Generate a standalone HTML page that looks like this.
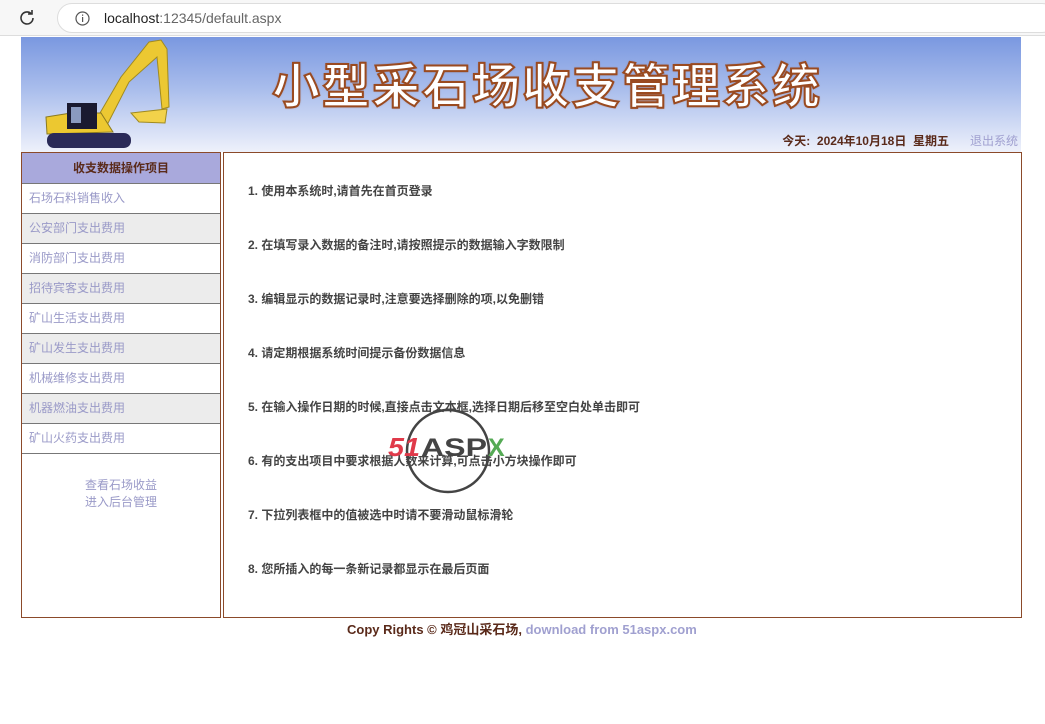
<!DOCTYPE html>
<html><head><meta charset="utf-8"><style>
*{margin:0;padding:0;box-sizing:border-box}
body{width:1045px;height:724px;background:#fff;font-family:"Liberation Sans","Noto Sans CJK SC","WenQuanYi Zen Hei",sans-serif;position:relative;overflow:hidden}
.bar{position:absolute;left:0;top:0;width:1045px;height:36px;background:#f7f7f7;border-bottom:1px solid #ddd}
.url{position:absolute;left:57px;top:3px;width:1000px;height:30px;border-radius:15px;background:#fff;border:1px solid #ddd;font-size:14px;color:#222;line-height:28px;padding-left:46px}
.url span{color:#666}
.banner{position:absolute;left:21px;top:37px;width:1000px;height:115px;background:linear-gradient(#7a98e0 0%,#a9bdec 45%,#eef1fb 100%)}
.title{position:absolute;left:251px;top:10px;font-size:48px;font-weight:bold;color:#fff;letter-spacing:2px;-webkit-text-stroke:2px #9a4a20;text-shadow:0 0 2px #9a4a20;white-space:nowrap}
.date{position:absolute;right:72px;top:95px;font-size:12px;font-weight:bold;color:#5a2a1a}
.logout{position:absolute;right:3px;top:95px;font-size:12px;color:#a0a0d0}
.left{position:absolute;left:21px;top:152px;width:200px;height:466px;border:1px solid #8b4a2a}
.mh{height:31px;background:#a9a9dc;border-bottom:1px solid #777;text-align:center;font-size:12px;font-weight:bold;color:#5a2a1a;line-height:30px}
.mi{height:30px;border-bottom:1px solid #777;font-size:12px;color:#9a9ac8;line-height:29px;padding-left:7px}
.mi.g{background:#ececec}
.links{text-align:center;font-size:12px;color:#9a9ac8;line-height:17px;margin-top:23px}
.main{position:absolute;left:223px;top:152px;width:799px;height:466px;border:1px solid #8b4a2a}
.main p{position:absolute;left:24px;font-size:12px;font-weight:bold;color:#444}
.foot{position:absolute;left:347px;top:619px;font-size:13px;font-weight:bold;color:#5a2a1a}
.foot span{color:#a0a0d0}
</style></head><body>
<div class="bar"><svg style="position:absolute;left:17px;top:8px" width="20" height="20" viewBox="0 0 20 20"><path d="M16 10a6 6 0 1 1-2-4.5" fill="none" stroke="#333" stroke-width="1.6"/><path d="M15 2v4h-4" fill="none" stroke="#333" stroke-width="1.6"/></svg>
<div class="url"><svg style="position:absolute;left:17px;top:7px" width="15" height="15"><circle cx="7.5" cy="7.5" r="6.5" fill="none" stroke="#555" stroke-width="1.2"/><rect x="7" y="6" width="1.2" height="5" fill="#555"/><rect x="7" y="3.5" width="1.2" height="1.3" fill="#555"/></svg>localhost<span>:12345/default.aspx</span></div></div>
<div class="banner">
<svg style="position:absolute;left:0;top:0" width="160" height="115" viewBox="0 0 160 115">
<path d="M72 88 L100 40 L128 5 L140 3 L146 12 L148 70 L141 72 L136 20 L108 45 L84 92 Z" fill="#ecc832" stroke="#a08a20" stroke-width="1"/>
<path d="M110 76 L146 72 L144 86 L118 85 Z" fill="#f2d24a" stroke="#a08a20"/>
<path d="M25 80 L50 76 L80 76 L92 95 L26 97 Z" fill="#ecc830" stroke="#8a7a20"/>
<rect x="46" y="66" width="30" height="26" fill="#1a1a30"/>
<rect x="50" y="70" width="10" height="16" fill="#8a9ac0"/>
<rect x="26" y="96" width="84" height="15" rx="7" fill="#2a2a58"/>
</svg>
<div class="title">小型采石场收支管理系统</div>
<div class="date">今天:&nbsp; 2024年10月18日&nbsp; 星期五</div>
<div class="logout">退出系统</div>
</div>
<div class="left">
<div class="mh">收支数据操作项目</div>
<div class="mi">石场石料销售收入</div>
<div class="mi g">公安部门支出费用</div>
<div class="mi">消防部门支出费用</div>
<div class="mi g">招待宾客支出费用</div>
<div class="mi">矿山生活支出费用</div>
<div class="mi g">矿山发生支出费用</div>
<div class="mi">机械维修支出费用</div>
<div class="mi g">机器燃油支出费用</div>
<div class="mi">矿山火药支出费用</div>
<div class="links">查看石场收益<br>进入后台管理</div>
</div>
<div class="main">
<p style="top:29px">1. 使用本系统时,请首先在首页登录</p>
<p style="top:83px">2. 在填写录入数据的备注时,请按照提示的数据输入字数限制</p>
<p style="top:137px">3. 编辑显示的数据记录时,注意要选择删除的项,以免删错</p>
<p style="top:191px">4. 请定期根据系统时间提示备份数据信息</p>
<p style="top:245px">5. 在输入操作日期的时候,直接点击文本框,选择日期后移至空白处单击即可</p>
<p style="top:299px">6. 有的支出项目中要求根据人数来计算,可点击小方块操作即可</p>
<p style="top:353px">7. 下拉列表框中的值被选中时请不要滑动鼠标滑轮</p>
<p style="top:407px">8. 您所插入的每一条新记录都显示在最后页面</p>
<svg style="position:absolute;left:160px;top:250px" width="135" height="95"><circle cx="64" cy="48" r="41" fill="none" stroke="#444" stroke-width="2.5"/><text x="4" y="53" font-family="Liberation Sans" font-style="italic" font-weight="bold" font-size="26" fill="#e03a4a" textLength="32" lengthAdjust="spacingAndGlyphs">51</text><text x="37" y="53" font-family="Liberation Sans" font-weight="bold" font-size="25" fill="#444" textLength="66" lengthAdjust="spacingAndGlyphs">ASP</text><text x="104" y="53" font-family="Liberation Sans" font-weight="bold" font-size="25" fill="#5a5">X</text></svg>
</div>
<div class="foot">Copy Rights © 鸡冠山采石场, <span>download from 51aspx.com</span></div>
</body></html>
